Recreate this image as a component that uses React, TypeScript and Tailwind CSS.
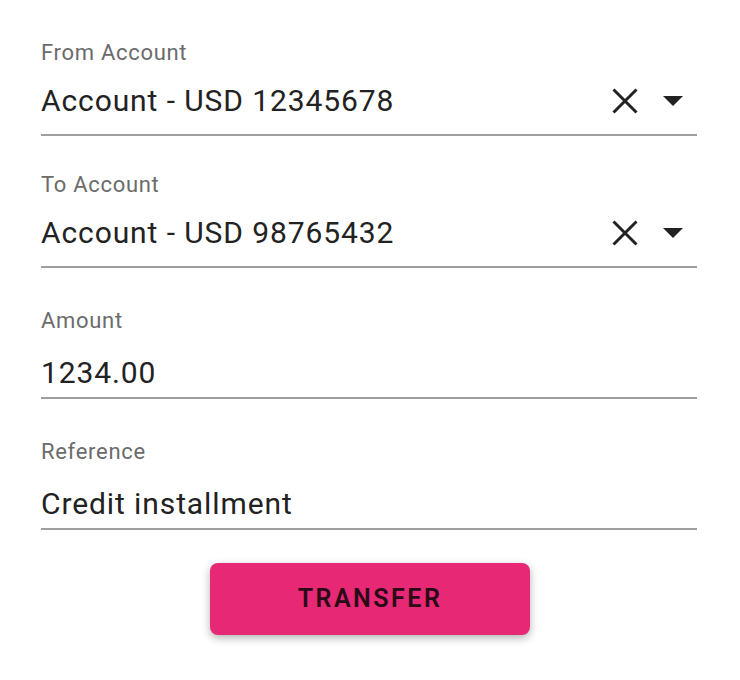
import React from "react";

const font = { fontFamily: '"Roboto", "Liberation Sans", sans-serif' };

function ClearIcon() {
  return (
    <svg width="26" height="26" viewBox="0 0 26 26" className="text-[#222]">
      <path d="M1.5 1.5L24.5 24.5M24.5 1.5L1.5 24.5" stroke="currentColor" strokeWidth="3" fill="none" />
    </svg>
  );
}

function DropIcon() {
  return (
    <svg width="20" height="10" viewBox="0 0 20 10" className="text-[#222]">
      <path d="M0 0L20 0L10 10Z" fill="currentColor" />
    </svg>
  );
}

// select fields sit a little higher than plain text inputs
function Field(props: { label: string; value: string; select?: boolean }) {
  return (
    <div className={props.select ? "flex flex-col" : "flex flex-col pt-[4px]"}>
      <div className="text-[22px] leading-[26px] tracking-[0.7px] text-[#6b6b6b]">{props.label}</div>
      <div
        className={
          props.select
            ? "flex items-center pt-[17px] pb-[15px] border-b-2 border-[#9e9e9e]"
            : "flex items-center pt-[21px] pb-[6px] border-b-2 border-[#9e9e9e]"
        }
      >
        <div className="flex-1 text-[30px] leading-[36px] tracking-[0.9px] text-[#222]">{props.value}</div>
        {props.select && (
          <div className="flex items-center gap-[25px] pr-[14px]">
            <ClearIcon />
            <DropIcon />
          </div>
        )}
      </div>
    </div>
  );
}

export default function App() {
  return (
    <div className="w-[740px] h-[680px] bg-white" style={font}>
      <div className="flex flex-col gap-[36px] pl-[41px] pr-[43px] pt-[40px]">
        <Field label="From Account" value="Account - USD 12345678" select />
        <Field label="To Account" value="Account - USD 98765432" select />
        <Field label="Amount" value="1234.00" />
        <Field label="Reference" value="Credit installment" />
      </div>
      <div className="flex justify-center pt-[33px]">
        <button className="w-[320px] h-[72px] rounded-[8px] bg-[#e62875] text-[#2a0a17] text-[25px] font-semibold tracking-[2.5px] shadow-[0_3px_8px_rgba(0,0,0,0.3)]">
          TRANSFER
        </button>
      </div>
    </div>
  );
}
